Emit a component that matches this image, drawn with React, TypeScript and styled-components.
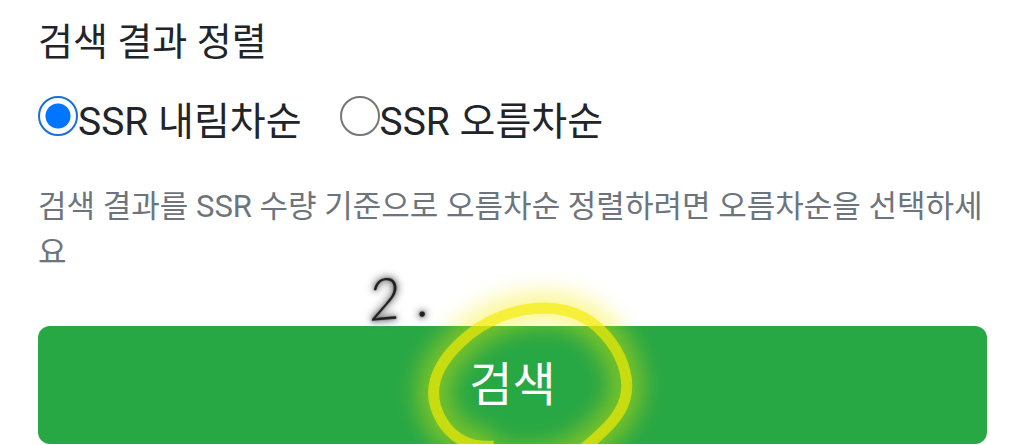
import React, { useState } from "react";
import styled, { createGlobalStyle } from "styled-components";

const GlobalStyle = createGlobalStyle`
  *, *::before, *::after { box-sizing: border-box; }
  body {
    margin: 0;
    background: #fff;
    color: #212529;
    font-family: Roboto, "Noto Sans CJK KR", sans-serif;
    font-size: 38px;
    line-height: 56px;
  }
`;

const Form = styled.form`
  padding: 14px 37px 1px 38px;
  overflow: hidden;
`;

const SortGroup = styled.fieldset`
  margin: 0;
  padding: 0;
  border: 0;
  min-width: 0;
`;

const Title = styled.legend`
  padding: 0;
  margin-bottom: 24px;
`;

const Options = styled.div`
  display: flex;
  flex-wrap: wrap;
  column-gap: 38px;
  font-size: 39px;
`;

const Option = styled.label`
  display: flex;
  align-items: flex-start;
`;

const Radio = styled.input`
  appearance: none;
  flex: none;
  width: 40px;
  height: 40px;
  margin: 2px 0 0;
  border: 2px solid #767676;
  border-radius: 50%;
  background: #fff;

  &:checked {
    border-color: #1a6fd8;
    background: radial-gradient(circle, #0075ff 12px, #fff 13px);
  }
`;

const Help = styled.p`
  margin: 34px 0 50px;
  color: #6c757d;
  font-size: 31px;
  line-height: 46px;
  word-break: break-all;
`;

const Action = styled.div`
  position: relative;
`;

const SearchButton = styled.button`
  display: block;
  width: 100%;
  padding: 24px;
  border: 0;
  border-radius: 12px;
  background: #28a745;
  color: #fff;
  font: inherit;
  font-size: 47px;
  line-height: 70px;
  cursor: pointer;
`;

const Highlight = styled.svg`
  position: absolute;
  left: 50%;
  bottom: 0;
  width: 340px;
  height: 180px;
  margin-left: -170px;
  pointer-events: none;
`;

const StepNote = styled.span`
  position: absolute;
  top: -55px;
  left: 50%;
  margin-left: -143px;
  transform: rotate(-5deg);
  transform-origin: left bottom;
  color: #222;
  font-family: Lato, sans-serif;
  font-size: 58px;
  font-style: italic;
  font-weight: 300;
  text-shadow: 0 0 2px #777, 0 0 5px #777, 0 0 8px #777, 0 0 10px #999;
  pointer-events: none;
`;

const ring =
  "M493 446 C470 448 452 439 441 421 C424 393 434 366 460 342 C483 320 514 308 543 308 C575 308 595 322 610 342 C623 360 629 381 624 399 C619 417 604 430 587 445 C563 465 520 466 493 460";

const sortOptions = [
  { value: "desc", label: "SSR 내림차순" },
  { value: "asc", label: "SSR 오름차순" },
];

export default function App() {
  const [sort, setSort] = useState("desc");

  return (
    <>
      <GlobalStyle />
      <Form onSubmit={(event: React.FormEvent) => event.preventDefault()}>
        <SortGroup>
          <Title>검색 결과 정렬</Title>
          <Options>
            {sortOptions.map(({ value, label }) => (
              <Option key={value}>
                <Radio
                  type="radio"
                  name="sort"
                  value={value}
                  checked={sort === value}
                  onChange={() => setSort(value)}
                />
                {label}
              </Option>
            ))}
          </Options>
        </SortGroup>
        <Help>검색 결과를 SSR 수량 기준으로 오름차순 정렬하려면 오름차순을 선택하세요</Help>
        <Action>
          <SearchButton type="submit">검색</SearchButton>
          <Highlight viewBox="342 264 340 180" aria-hidden="true">
            <defs>
              <filter id="glow" x="-30%" y="-30%" width="160%" height="160%">
                <feGaussianBlur stdDeviation="11" />
              </filter>
            </defs>
            <path d={ring} fill="none" stroke="#f5ec03" strokeWidth="34" opacity="0.4" filter="url(#glow)" />
            <path d={ring} fill="none" stroke="#f5ec03" strokeWidth="11" opacity="0.66" />
          </Highlight>
          <StepNote>2 .</StepNote>
        </Action>
      </Form>
    </>
  );
}
